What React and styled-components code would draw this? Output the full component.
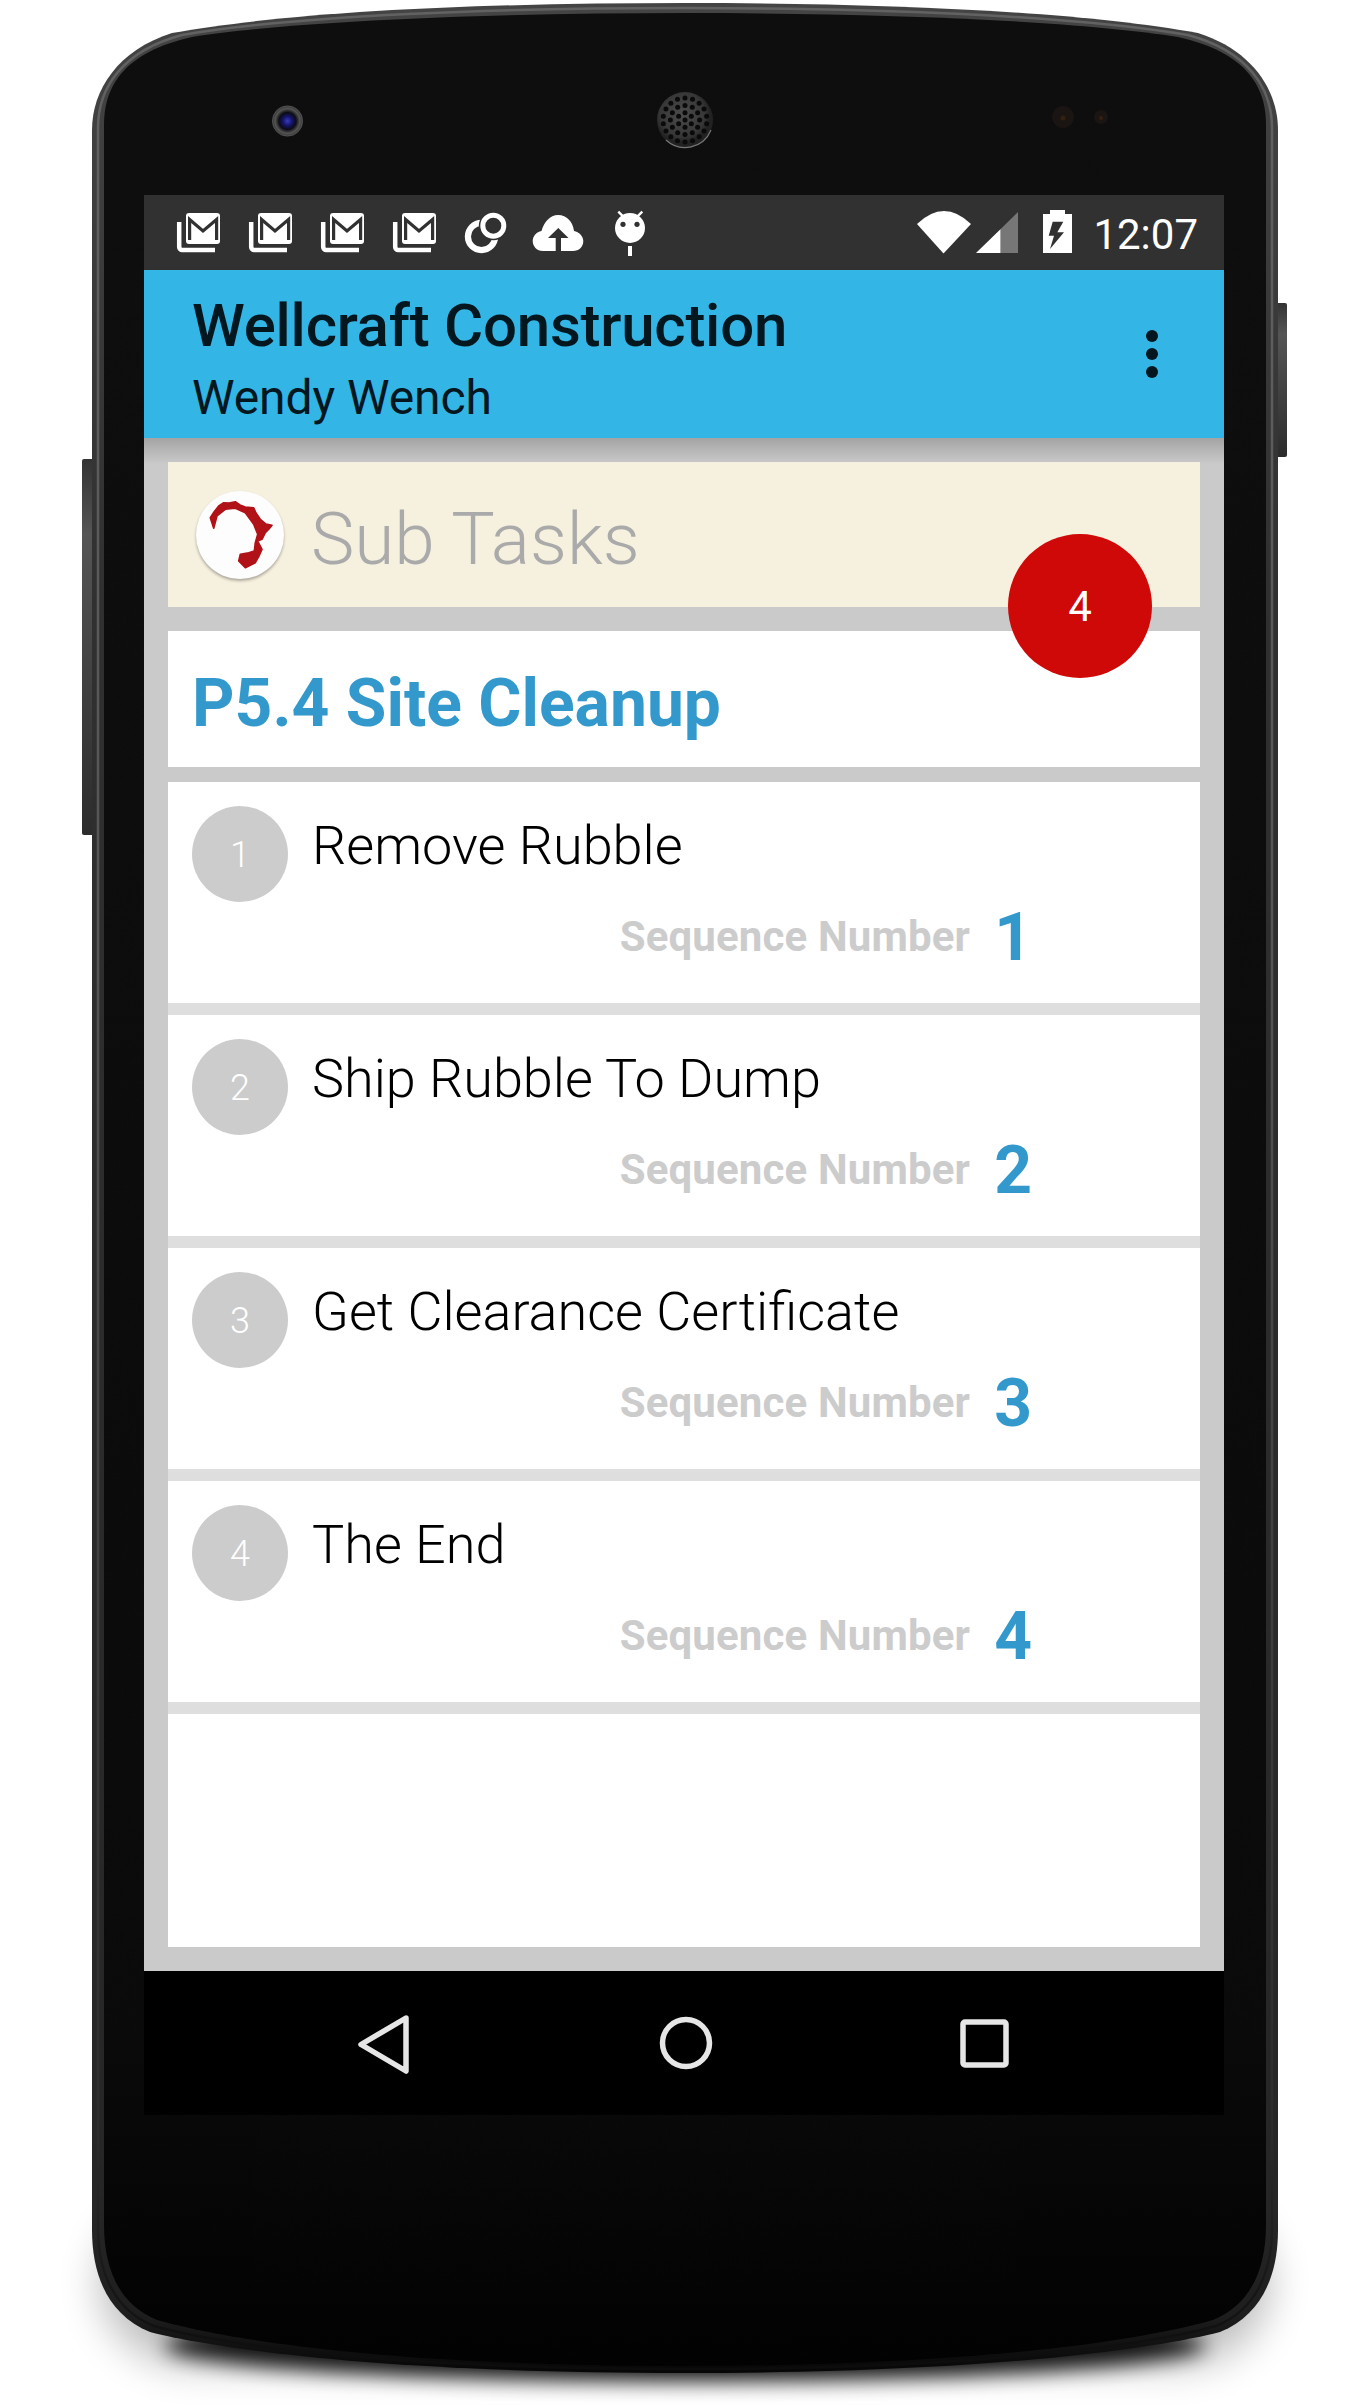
import React from "react";
import styled, { createGlobalStyle } from "styled-components";

const Global = createGlobalStyle`
  html, body { margin: 0; padding: 0; background: #fff; }
  body { font-family: Roboto, "Liberation Sans", sans-serif; }
  * { box-sizing: border-box; }
`;

const Phone = styled.div`
  position: relative;
  width: 1370px;
  height: 2405px;
  padding: 195px 146px 0 144px;
  overflow: hidden;
`;
const PhoneArt = styled.svg`
  position: absolute;
  left: 0;
  top: 0;
`;
const Screen = styled.div`
  position: relative;
  width: 1080px;
  display: flex;
  flex-direction: column;
`;
const StatusBar = styled.div`
  height: 75px;
  background: #313131;
  display: flex;
  align-items: flex-start;
  padding-left: 18px;
`;
const StatusIcons = styled.div`
  display: flex;
`;
const StatusRight = styled.div`
  margin-left: auto;
  display: flex;
  align-items: flex-start;
  padding-right: 26px;
`;
const Clock = styled.span`
  font-size: 42px;
  font-weight: 400;
  line-height: 50px;
  margin: 15px 0 0 21px;
  color: #fff;
`;
const AppBar = styled.header`
  height: 168px;
  background: #33b5e6;
  display: flex;
  justify-content: space-between;
  padding: 21px 60px 0 48px;
  color: #04171f;
`;
const AppTitle = styled.div`
  font-size: 60px;
  font-weight: 500;
  line-height: 70px;
  letter-spacing: -0.25px;
`;
const AppSub = styled.div`
  font-size: 48px;
  font-weight: 400;
  line-height: 56px;
  margin-top: 9px;
  letter-spacing: -0.1px;
`;
const Kebab = styled.svg`
  margin-top: 37px;
  flex: none;
`;
const Content = styled.main`
  position: relative;
  height: 1533px;
  background: #cacaca;
  padding: 24px;
  display: flex;
  flex-direction: column;
  &::before {
    content: "";
    position: absolute;
    left: 0;
    right: 0;
    top: 0;
    height: 26px;
    background: linear-gradient(#a4a4a4, #cacaca);
  }
`;
const SubCard = styled.section`
  position: relative;
  height: 145px;
  background: #f6f0de;
  display: flex;
  align-items: center;
  padding-left: 28px;
`;
const Logo = styled.div`
  width: 88px;
  height: 88px;
  border-radius: 50%;
  background: #fdfdfd;
  box-shadow: 0 2px 3px rgba(0, 0, 0, 0.3);
  flex: none;
`;
const SubTitle = styled.h1`
  margin: 9px 0 0 27px;
  font-size: 73px;
  font-weight: 300;
  color: #aaaaaa;
`;
const TaskCard = styled.section`
  height: 136px;
  margin-top: 24px;
  background: #fff;
  display: flex;
  align-items: center;
  padding-left: 24px;
`;
const TaskTitle = styled.h2`
  margin: 8px 0 0;
  font-size: 66px;
  font-weight: 700;
  color: #3399cc;
`;
const List = styled.div`
  margin-top: 15px;
  flex: 1;
  display: grid;
  grid-template-rows: repeat(4, 221px) 1fr;
  row-gap: 12px;
  background: #dedede;
`;
const Row = styled.article`
  background: #fff;
  display: flex;
  padding: 24px 0 0 24px;
`;
const Avatar = styled.div`
  width: 96px;
  height: 96px;
  padding-top: 2px;
  border-radius: 50%;
  background: #cccccc;
  color: #fff;
  font-size: 36px;
  font-weight: 300;
  display: flex;
  align-items: center;
  justify-content: center;
  flex: none;
`;
const RowBody = styled.div`
  flex: 1;
  margin-left: 24px;
  padding-top: 8px;
`;
const RowTitle = styled.div`
  font-size: 54px;
  font-weight: 300;
  line-height: 64px;
  color: #000;
`;
const SeqLine = styled.div`
  margin-top: 27px;
  display: flex;
  align-items: center;
  justify-content: flex-end;
  padding-right: 168px;
`;
const SeqLabel = styled.span`
  font-size: 42px;
  font-weight: 700;
  letter-spacing: 0.15px;
  padding-bottom: 3px;
  color: #cccccc;
`;
const SeqValue = styled.span`
  font-size: 66px;
  font-weight: 700;
  line-height: 66px;
  margin-left: 24px;
  color: #3399cc;
`;
const Badge = styled.div`
  position: absolute;
  right: 72px;
  top: 96px;
  width: 144px;
  height: 144px;
  border-radius: 50%;
  background: #cf0808;
  color: #fff;
  font-size: 42px;
  display: flex;
  align-items: center;
  justify-content: center;
`;
const NavBar = styled.nav`
  height: 144px;
  background: #000;
  display: flex;
  align-items: flex-start;
  padding: 44px 0 0 209px;
  gap: 243px;
`;

const topLeft = "C92 90 118 50 172 33 C300 10 500 3 685 3";
const outer = `M92 130 ${topLeft} C870 3 1070 10 1198 33 C1252 50 1278 90 1278 130 L1278 2230 C1278 2275 1262 2315 1220 2332 C1170 2345 1010 2373 685 2373 C360 2373 200 2345 150 2332 C108 2315 92 2275 92 2230 Z`;
const inner = "M104 125 C104 85 125 52 192 37 C300 20 500 13 685 13 C870 13 1070 20 1178 37 C1245 52 1266 85 1266 125 L1266 2225 C1266 2270 1250 2305 1213 2320 C1160 2335 1010 2366 685 2366 C360 2366 210 2335 157 2320 C120 2305 104 2270 104 2225 Z";
const mid = "M98 128 C98 88 122 51 182 35 C300 15 500 8 685 8 C870 8 1070 15 1188 35 C1248 51 1272 88 1272 128 L1272 2228 C1272 2272 1256 2310 1216 2326 C1165 2340 1010 2369 685 2369 C360 2369 205 2340 154 2326 C114 2310 98 2272 98 2228 Z";

const speakerHoles = [[0, 1], [7.3, 6], [14.6, 12], [22, 18]].flatMap(([r, n]) =>
  Array.from({ length: n }, (_, i) => {
    const a = (i / n) * Math.PI * 2 + Math.PI / 2;
    return [685 + r * Math.cos(a), 120 + r * Math.sin(a)];
  })
);

function PhoneBody() {
  return (
    <PhoneArt width="1370" height="2405" viewBox="0 0 1370 2405">
      <defs>
        <linearGradient id="bevel" x1="0" y1="0" x2="0" y2="1">
          <stop offset="0" stopColor="#444" />
          <stop offset="0.25" stopColor="#303030" />
          <stop offset="0.93" stopColor="#262626" />
          <stop offset="0.975" stopColor="#1e1e1e" />
          <stop offset="1" stopColor="#060606" />
        </linearGradient>
        <linearGradient id="stripe" x1="0" y1="0" x2="0" y2="1">
          <stop offset="0" stopColor="#626262" />
          <stop offset="0.4" stopColor="#555" />
          <stop offset="0.9" stopColor="#2c2c2c" />
          <stop offset="1" stopColor="#0c0c0c" />
        </linearGradient>
        <linearGradient id="face" x1="0" y1="0" x2="0" y2="1">
          <stop offset="0" stopColor="#0e0e0e" />
          <stop offset="0.86" stopColor="#0a0a0a" />
          <stop offset="0.96" stopColor="#040404" />
          <stop offset="1" stopColor="#020202" />
        </linearGradient>
        <linearGradient id="btn" x1="0" y1="0" x2="0" y2="1">
          <stop offset="0" stopColor="#333" />
          <stop offset="0.2" stopColor="#555" />
          <stop offset="1" stopColor="#2c2c2c" />
        </linearGradient>
        <radialGradient id="lens">
          <stop offset="0" stopColor="#3a3ac0" />
          <stop offset="0.3" stopColor="#14146a" />
          <stop offset="0.55" stopColor="#0c0c14" />
          <stop offset="0.8" stopColor="#555" />
          <stop offset="1" stopColor="#2a2a2a" />
        </radialGradient>
        <radialGradient id="grill" cx="0.45" cy="0.4">
          <stop offset="0" stopColor="#4c4c4c" />
          <stop offset="0.8" stopColor="#363636" />
          <stop offset="1" stopColor="#222" />
        </radialGradient>
        <filter id="blurWide" x="-20%" y="-50%" width="140%" height="200%">
          <feGaussianBlur stdDeviation="20" />
        </filter>
        <filter id="blurTight" x="-20%" y="-100%" width="140%" height="300%">
          <feGaussianBlur stdDeviation="10" />
        </filter>
        <filter id="grain" x="0" y="0" width="100%" height="100%">
          <feTurbulence type="fractalNoise" baseFrequency="0.9" numOctaves="2" seed="4" />
          <feColorMatrix values="0 0 0 0 1  0 0 0 0 1  0 0 0 0 1  0.5 0 0 0 -0.18" />
        </filter>
        <clipPath id="faceClip">
          <path d={inner} />
        </clipPath>
      </defs>
      <rect x="100" y="2200" width="1170" height="165" rx="90" fill="#000" opacity="0.26" filter="url(#blurWide)" />
      <ellipse cx="685" cy="2345" rx="520" ry="36" fill="#000" opacity="0.9" filter="url(#blurTight)" />
      <rect x="82" y="459" width="14" height="376" rx="2" fill="url(#btn)" />
      <rect x="1274" y="303" width="13" height="154" rx="2" fill="url(#btn)" />
      <path d={outer} fill="url(#bevel)" />
      <path d={mid} fill="none" stroke="url(#stripe)" strokeWidth="2.5" />
      <path d={inner} fill="url(#face)" />
      <g clipPath="url(#faceClip)">
        <rect x="104" y="13" width="1162" height="2353" filter="url(#grain)" opacity="0.04" />
      </g>
      <circle cx="287.5" cy="121" r="15.5" fill="url(#lens)" />
      <circle cx="287.5" cy="121" r="15" fill="none" stroke="#666" strokeWidth="1" opacity="0.6" />
      <circle cx="685" cy="120" r="28" fill="url(#grill)" />
      <path d="M666 140 A28 28 0 0 0 711 130" fill="none" stroke="#777" strokeWidth="1.2" />
      {speakerHoles.map(([x, y], i) => (
        <circle key={i} cx={x} cy={y} r="2.5" fill="#0a0a0a" />
      ))}
      <circle cx="1063" cy="117" r="11" fill="#1a1512" />
      <circle cx="1063" cy="118" r="2.5" fill="#33200f" />
      <circle cx="1101" cy="117" r="7" fill="#1a1512" />
      <circle cx="1101" cy="118" r="2" fill="#33200f" />
    </PhoneArt>
  );
}

const DARK = "#313131";

const GmailIcon = () => (
  <svg width="72" height="75" viewBox="0 0 72 75">
    <path d="M17.2 27 V52 a3 3 0 0 0 3 3 H53" fill="none" stroke="#fff" strokeWidth="4.5" />
    <rect x="24" y="18" width="34" height="31" rx="3" fill="#fff" />
    <path d="M27.6 45 V24.5 L41 36 L54.6 24.5 V45" fill="none" stroke={DARK} strokeWidth="3.2" />
  </svg>
);
const RingsIcon = () => (
  <svg width="72" height="75" viewBox="0 0 72 75">
    <circle cx="31.5" cy="41.5" r="13.6" fill="none" stroke="#fff" strokeWidth="6.2" />
    <circle cx="43.3" cy="30.7" r="11" fill={DARK} stroke={DARK} strokeWidth="7" />
    <circle cx="43.3" cy="30.7" r="10.5" fill="none" stroke="#fff" strokeWidth="5" />
  </svg>
);
const CloudIcon = () => (
  <svg width="72" height="75" viewBox="0 0 72 75">
    <path d="M21 56 C14.5 56 10.7 51 10.7 46 C10.7 41 14.5 37 19.5 36 C22 27 28 20 36 20 C45 20 51 27 52 36 C57 37 61.3 41 61.3 46 C61.3 52 57 56 51 56 Z" fill="#fff" />
    <path d="M36.3 33 L46.5 43 H39 V56 H33.7 V43 H26 Z" fill={DARK} />
  </svg>
);
const AndroidIcon = () => (
  <svg width="72" height="75" viewBox="0 0 72 75">
    <path d="M24.3 16.7 L29.3 21.7 M48.3 16.7 L43.3 21.7" stroke="#fff" strokeWidth="2.4" />
    <circle cx="36" cy="33" r="15" fill="#fff" />
    <circle cx="29" cy="29.3" r="2.6" fill={DARK} />
    <circle cx="43" cy="29.3" r="2.6" fill={DARK} />
    <rect x="34" y="51" width="4" height="10" fill="#fff" />
  </svg>
);
const RightIcons = () => (
  <svg width="156" height="75" viewBox="0 0 156 75">
    <path d="M1 29 Q28 3 55 29 L27.5 58.5 Z" fill="#fff" />
    <path d="M60 58 L84.7 34 V58 Z" fill="#fff" />
    <path d="M84.7 34 L102 17 V58 H84.7 Z" fill="#777" />
    <path
      fillRule="evenodd"
      d="M134 15 H149 V19 H156 V58 H127 V19 H134 Z M136.7 26.7 L147.3 26.7 L141.3 37.3 L148 37.3 L134 54 L138 40.7 L132.7 40.7 Z"
      fill="#fff"
    />
  </svg>
);
const BackIcon = () => (
  <svg width="60" height="60" viewBox="0 0 60 60" style={{ flex: "none" }}>
    <path d="M53 3 L8 29.5 L53 56 Z" fill="none" stroke="#e6e6e6" strokeWidth="5.5" strokeLinejoin="round" />
  </svg>
);

const FaceLogo = () => (
  <svg width="88" height="88" viewBox="0 0 88 88">
    <path
      d="M17.7 37.3 L14.3 26.7 L18 21 L22.7 15 L27.7 11.7 L33 12 L39.3 10.7 L44 14 L49.3 16 L57.7 16.7 L60 22 L64.3 28.3 L70 33 L76 34.3 L73 38 L69.3 41.7 L66 48.3 L61.7 50 L66 58.3 L63 65 L59.3 71.7 L49.3 76.7 L42.7 70 L44.3 63.3 L52.7 61.7 L58.3 60 L59.3 51.7 L61.7 43.3 L57.7 33.3 L49.3 21.7 L39.3 17.3 L29.3 18.3 L21 25 Z"
      fill="#b01218"
      stroke="#b01218"
      strokeWidth="1.6"
      strokeLinejoin="round"
    />
  </svg>
);

const tasks = ["Remove Rubble", "Ship Rubble To Dump", "Get Clearance Certificate", "The End"];

export default function App() {
  return (
    <>
      <Global />
      <Phone>
        <PhoneBody />
        <Screen>
          <StatusBar>
            <StatusIcons>
              <GmailIcon />
              <GmailIcon />
              <GmailIcon />
              <GmailIcon />
              <RingsIcon />
              <CloudIcon />
              <AndroidIcon />
            </StatusIcons>
            <StatusRight>
              <RightIcons />
              <Clock>12:07</Clock>
            </StatusRight>
          </StatusBar>
          <AppBar>
            <div>
              <AppTitle>Wellcraft Construction</AppTitle>
              <AppSub>Wendy Wench</AppSub>
            </div>
            <Kebab width="24" height="60" viewBox="0 0 24 60">
              <circle cx="12" cy="8" r="6" fill="#04171f" />
              <circle cx="12" cy="26" r="6" fill="#04171f" />
              <circle cx="12" cy="44" r="6" fill="#04171f" />
            </Kebab>
          </AppBar>
          <Content>
            <SubCard>
              <Logo>
                <FaceLogo />
              </Logo>
              <SubTitle>Sub Tasks</SubTitle>
            </SubCard>
            <TaskCard>
              <TaskTitle>P5.4 Site Cleanup</TaskTitle>
            </TaskCard>
            <List>
              {tasks.map((t, i) => (
                <Row key={t}>
                  <Avatar>{i + 1}</Avatar>
                  <RowBody>
                    <RowTitle>{t}</RowTitle>
                    <SeqLine>
                      <SeqLabel>Sequence Number</SeqLabel>
                      <SeqValue>{i + 1}</SeqValue>
                    </SeqLine>
                  </RowBody>
                </Row>
              ))}
              <Row />
            </List>
            <Badge>4</Badge>
          </Content>
          <NavBar>
            <BackIcon />
            <svg width="60" height="60" viewBox="0 0 60 60" style={{ flex: "none" }}>
              <circle cx="30" cy="28" r="23.5" fill="none" stroke="#e6e6e6" strokeWidth="5.5" />
            </svg>
            <svg width="60" height="60" viewBox="0 0 60 60" style={{ flex: "none" }}>
              <rect x="4" y="7" width="43" height="43" rx="2" fill="none" stroke="#e6e6e6" strokeWidth="5.5" />
            </svg>
          </NavBar>
        </Screen>
      </Phone>
    </>
  );
}
